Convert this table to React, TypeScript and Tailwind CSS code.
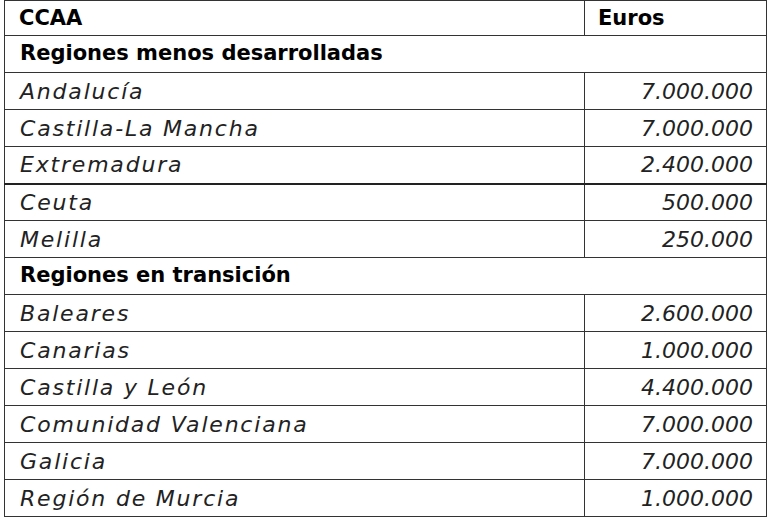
type Row = { name: string; euros?: string; group?: boolean; thick?: boolean };

const rows: Row[] = [
  { name: "Regiones menos desarrolladas", group: true },
  { name: "Andalucía", euros: "7.000.000" },
  { name: "Castilla-La Mancha", euros: "7.000.000" },
  { name: "Extremadura", euros: "2.400.000", thick: true },
  { name: "Ceuta", euros: "500.000" },
  { name: "Melilla", euros: "250.000" },
  { name: "Regiones en transición", group: true },
  { name: "Baleares", euros: "2.600.000" },
  { name: "Canarias", euros: "1.000.000" },
  { name: "Castilla y León", euros: "4.400.000" },
  { name: "Comunidad Valenciana", euros: "7.000.000" },
  { name: "Galicia", euros: "7.000.000" },
  { name: "Región de Murcia", euros: "1.000.000" },
];

export default function App() {
  return (
    <div className="w-[773px] h-[520px] bg-white pl-1 font-['DejaVu_Sans',sans-serif] text-[#222]">
      <table className="w-[763px] border-collapse table-fixed">
        <colgroup>
          <col className="w-[580px]" />
          <col className="w-[182px]" />
        </colgroup>
        <tbody>
          <tr className="h-[35px]">
            <th className="border border-[#333] pl-[14px] pt-[2px] text-left text-[21px] font-bold text-black">CCAA</th>
            <th className="border border-[#333] pl-[13px] pt-[2px] text-left text-[21px] font-bold text-black">Euros</th>
          </tr>
          {rows.map((r) =>
            r.group ? (
              <tr key={r.name} className="h-[37px]">
                <td colSpan={2} className="border border-[#333] pl-[15px] text-[21px] font-bold text-black">
                  {r.name}
                </td>
              </tr>
            ) : (
              <tr key={r.name} className="h-[37px]">
                <td className={`border border-[#333] pl-[15px] text-[22px] italic tracking-[1.8px] ${r.thick ? "border-b-2 border-b-[#222]" : ""}`}>
                  {r.name}
                </td>
                <td className={`border border-[#333] pr-[13px] text-right text-[22px] italic ${r.thick ? "border-b-2 border-b-[#222]" : ""}`}>
                  {r.euros}
                </td>
              </tr>
            )
          )}
        </tbody>
      </table>
    </div>
  );
}
